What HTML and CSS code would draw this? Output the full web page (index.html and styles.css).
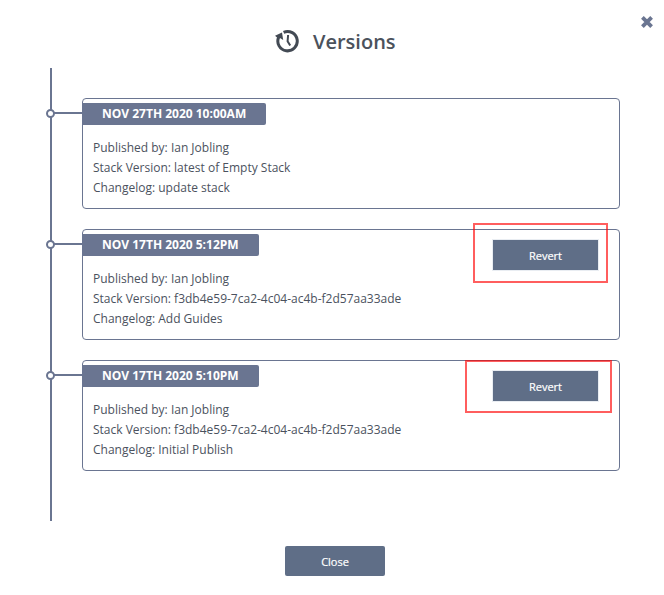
FILE: index.html
```html
<!DOCTYPE html>
<html lang="en">
<head>
<meta charset="utf-8">
<title>Versions</title>
<link rel="stylesheet" href="styles.css">
</head>
<body>
<main class="dialog">
  <button class="dismiss" aria-label="Close dialog">
    <svg width="14" height="14" viewBox="0 0 14 14"><path d="M2.4 2.4L11.6 11.6M11.6 2.4L2.4 11.6"/></svg>
  </button>
  <header class="title">
    <svg class="history" width="26" height="24" viewBox="0 0 26 24">
      <path class="ring" d="M8.6 3.3A9.7 9.7 0 1 1 3.7 8.2"/>
      <path class="head" d="M0 6.8L7 3.6L8.2 11L5.4 9.2L2 8.6Z"/>
      <path class="hands" d="M13.1 6L12.6 12.2L15.2 16.6"/>
    </svg>
    <h1>Versions</h1>
  </header>
  <section class="timeline">
    <article class="card">
      <h2 class="date">NOV 27TH 2020 10:00AM</h2>
      <div class="details">
        <p>Published by: Ian Jobling</p>
        <p>Stack Version: latest of Empty Stack</p>
        <p>Changelog: update stack</p>
      </div>
    </article>
    <article class="card">
      <h2 class="date">NOV 17TH 2020 5:12PM</h2>
      <div class="details">
        <p>Published by: Ian Jobling</p>
        <p>Stack Version: f3db4e59-7ca2-4c04-ac4b-f2d57aa33ade</p>
        <p>Changelog: Add Guides</p>
      </div>
      <button class="button revert">Revert</button>
      <span class="mark mark-first"></span>
    </article>
    <article class="card">
      <h2 class="date">NOV 17TH 2020 5:10PM</h2>
      <div class="details">
        <p>Published by: Ian Jobling</p>
        <p>Stack Version: f3db4e59-7ca2-4c04-ac4b-f2d57aa33ade</p>
        <p>Changelog: Initial Publish</p>
      </div>
      <button class="button revert">Revert</button>
      <span class="mark mark-second"></span>
    </article>
  </section>
  <footer class="actions"><button class="button close">Close</button></footer>
</main>
</body>
</html>
```
FILE: styles.css
```css
*, *::before, *::after { box-sizing: border-box; }
body {
  margin: 0;
  background: #fff;
  color: #4b525e;
  font-family: "Open Sans", sans-serif;
  font-size: 12px;
}
h1, h2, p { margin: 0; }
.dialog {
  position: relative;
  width: 664px;
  height: 595px;
  padding: 28px 44px 0 50px;
}
.dismiss {
  position: absolute;
  top: 15px;
  right: 10px;
  width: 14px;
  height: 14px;
  padding: 0;
  border: 0;
  background: none;
}
.dismiss svg { display: block; }
.dismiss path { stroke: #6a7591; stroke-width: 3.8; }
.title {
  display: flex;
  align-items: center;
  gap: 12px;
  height: 26px;
  margin-left: 225px;
}
.title h1 {
  padding-top: 1px;
  font-size: 20px;
  line-height: 26px;
  font-weight: 600;
  color: #4b525c;
}
.history path { fill: none; stroke: #434a54; }
.history .ring { stroke-width: 3; }
.history .head { fill: #434a54; stroke: none; }
.history .hands { stroke-width: 2; }
.timeline {
  display: flex;
  flex-direction: column;
  gap: 20px;
  height: 453px;
  margin-top: 14px;
  padding: 30px 0 0 30px;
  border-left: 2px solid #6a7591;
}
.card {
  position: relative;
  width: 538px;
  height: 111px;
  padding-top: 4px;
  border: 1px solid #6a7591;
  border-radius: 4px;
}
.card::before {
  content: "";
  position: absolute;
  top: 13px;
  left: -31px;
  width: 30px;
  height: 2px;
  background: #6a7591;
}
.card::after {
  content: "";
  position: absolute;
  top: 10px;
  left: -37px;
  width: 9px;
  height: 9px;
  border: 2px solid #6a7591;
  border-radius: 50%;
  background: #fff;
}
.date {
  width: fit-content;
  height: 22px;
  padding: 0 20px 0 19px;
  border-radius: 0 2px 2px 0;
  background: #6a7591;
  color: #fff;
  font-size: 12px;
  line-height: 22px;
  font-weight: 700;
}
.details { padding: 13px 10px 0; line-height: 20px; }
.button {
  height: 30px;
  padding: 1px 0 0;
  border: 0;
  border-radius: 2px;
  background: #5f6e87;
  color: #fff;
  font: 500 11px/29px "Open Sans", sans-serif;
  text-align: center;
  -webkit-text-stroke: 0.2px #fff;
}
.revert {
  position: absolute;
  top: 10px;
  right: 21px;
  width: 105px;
  border-radius: 0;
  box-shadow: 0 0 0 1px #e9edf2;
}
.mark {
  position: absolute;
  border: 2px solid rgba(255, 0, 0, 0.63);
}
.mark-first { top: -7px; left: 390px; width: 135px; height: 60px; }
.mark-second { top: -1px; left: 382px; width: 147px; height: 53px; }
.actions { display: flex; margin: 25px 0 0 235px; }
.close { width: 100px; }
```
